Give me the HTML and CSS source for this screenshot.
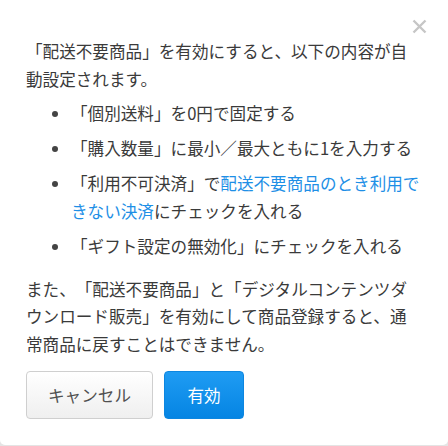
FILE: index.html
```html
<!DOCTYPE html>
<html lang="ja">
<head>
<meta charset="utf-8">
<link rel="stylesheet" href="styles.css">
</head>
<body>
<div class="dialog">
  <button class="close" aria-label="閉じる">
    <svg width="15" height="15" viewBox="0 0 15 15"><path d="M1.5 1.5 L13.5 13.5 M13.5 1.5 L1.5 13.5" stroke="#c6c6c6" stroke-width="2.4" fill="none"/></svg>
  </button>
  <p class="lead">「配送不要商品」を有効にすると、以下の内容が自動設定されます。</p>
  <ul class="items">
    <li><span>「個別送料」を0円で固定する</span></li>
    <li><span>「購入数量」に最小／最大ともに1を入力する</span></li>
    <li><span>「利用不可決済」で<a class="link" href="#">配送不要商品のとき利用できない決済</a>にチェックを入れる</span></li>
    <li><span>「ギフト設定の無効化」にチェックを入れる</span></li>
  </ul>
  <p class="note">また、「配送不要商品」と「デジタルコンテンツダウンロード販売」を有効にして商品登録すると、通常商品に戻すことはできません。</p>
  <div class="actions">
    <button class="btn btn-cancel">キャンセル</button>
    <button class="btn btn-primary">有効</button>
  </div>
</div>
</body>
</html>
```

FILE: styles.css
```css
html {
  background: #e4e4e4;
}
body {
  margin: 0;
  font-family: "Noto Sans CJK JP", "Noto Sans", sans-serif;
  color: #3a3a3a;
}
.dialog {
  position: relative;
  box-sizing: border-box;
  height: 445px;
  background: #fff;
  border-radius: 0 0 5px 5px;
  padding: 38px 26px 0 26px;
  font-size: 16.6px;
  line-height: 27.6px;
  text-spacing-trim: space-all;
}
.close {
  position: absolute;
  top: 19px;
  right: 21px;
  border: 0;
  padding: 0;
  background: none;
  width: 15px;
  height: 15px;
  display: block;
}
.close svg { display: block; }
.lead {
  margin: 0;
}
.items {
  list-style: none;
  margin: 7px 0 0 0;
  padding: 0 0 0 45px;
}
.items li {
  display: flex;
  position: relative;
  margin-bottom: 7.5px;
}
.items li::before {
  content: "";
  position: absolute;
  left: -19px;
  top: 11px;
  width: 6px;
  height: 6px;
  border-radius: 50%;
  background: #444;
}
.items li:last-child {
  margin-bottom: 0;
}
.link {
  color: #1e8fe6;
  text-decoration: none;
}
.note {
  margin: 15px 0 0 0;
}
.actions {
  display: flex;
  gap: 11px;
  margin-top: 13px;
}
.btn {
  box-sizing: border-box;
  height: 48px;
  border-radius: 4px;
  font-family: inherit;
  font-size: 16.6px;
  padding: 0;
  cursor: pointer;
  text-spacing-trim: space-all;
}
.btn-cancel {
  width: 127px;
  border: 1px solid #cfcfcf;
  background: linear-gradient(#ffffff, #efefef);
  color: #505050;
}
.btn-primary {
  width: 80px;
  border: 1px solid #0d86e0;
  background: linear-gradient(#1f9cf3, #0585e3);
  color: #fff;
}
```
